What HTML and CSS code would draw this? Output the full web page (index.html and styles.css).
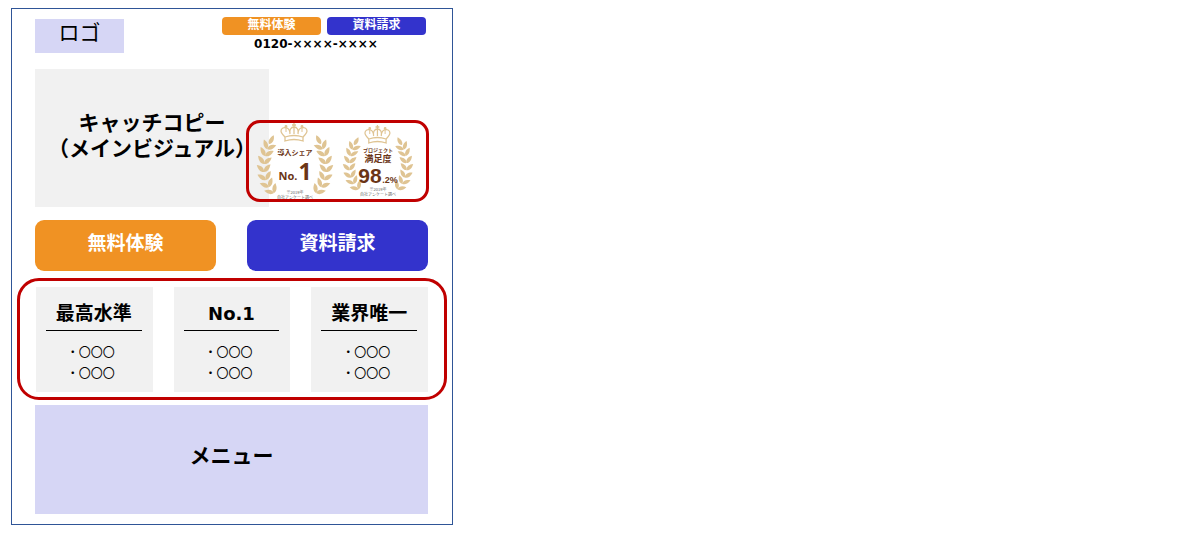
FILE: index.html
```html
<!DOCTYPE html>
<html lang="ja">
<head>
  <meta charset="UTF-8">
  <meta name="viewport" content="width=device-width, initial-scale=1">
  <title>ファーストビュー構成</title>
  <link rel="stylesheet" href="styles.css">
</head>
<body>
  <!-- 月桂樹と王冠の部品 -->
  <svg class="defs" width="0" height="0" aria-hidden="true">
    <defs>
      <path id="leaf" d="M0 0C-3-2-3-6-1-10C2-7 3-3 0 0Z"/>
      <g id="pair">
        <use href="#leaf" transform="rotate(-36)"/>
        <use href="#leaf" transform="scale(-1 1) rotate(-38)"/>
      </g>
      <g id="branch" fill="#dfc493">
        <use href="#leaf" transform="translate(12 9) rotate(34)"/>
        <use href="#pair" transform="translate(10 14) rotate(24)"/>
        <use href="#pair" transform="translate(8 21) rotate(16)"/>
        <use href="#pair" transform="translate(7 29) rotate(6)"/>
        <use href="#pair" transform="translate(7 37) rotate(-4)"/>
        <use href="#pair" transform="translate(9 45) rotate(-16)"/>
        <use href="#pair" transform="translate(12 52) rotate(-26)"/>
        <use href="#pair" transform="translate(17 58) rotate(-36)"/>
      </g>
      <g id="crown" fill="none" stroke="#dfc493" stroke-width="1.3">
        <path d="M5 14C3 12 1 10 1 8C1 5 4 4 7 5C9 6 10 8 10 11M23 14C25 12 27 10 27 8C27 5 24 4 21 5C19 6 18 8 18 11M10 11C9 7 11 4 14 4C17 4 19 7 18 11M14 4V11M14 0V4M12 2H16"/>
        <path d="M5 14Q14 11 23 14V18Q14 15 5 18Z"/>
        <path d="M6 5V9M22 5V9" stroke-width="1"/>
        <circle cx="6" cy="3.5" r=".8"/>
        <circle cx="22" cy="3.5" r=".8"/>
      </g>
    </defs>
  </svg>

  <div class="page">
    <header class="header">
      <div class="logo">ロゴ</div>
      <div class="contact">
        <div class="contact-buttons">
          <button type="button" class="btn btn-small btn-trial">無料体験</button>
          <button type="button" class="btn btn-small btn-request">資料請求</button>
        </div>
        <p class="tel">0120-××××-××××</p>
      </div>
    </header>

    <main>
      <section class="hero">
        <h1 class="catch">キャッチコピー<br>（メインビジュアル）</h1>
        <div class="awards">
          <svg class="medal" width="76" height="76" viewBox="0 0 76 76">
            <use href="#crown" transform="translate(23 0)"/>
            <use href="#branch" transform="translate(0 12)"/>
            <use href="#branch" transform="translate(76 12) scale(-1 1)"/>
            <text class="medal-label" x="38" y="32">導入シェア</text>
            <text class="medal-no" x="31" y="57">No.</text>
            <text class="medal-one" x="48" y="57">1</text>
            <text class="medal-note" x="38" y="71">※2019年</text>
            <text class="medal-note" x="38" y="76">自社アンケート調べ</text>
          </svg>
          <svg class="medal" width="70" height="76" viewBox="0 0 70 76">
            <use href="#crown" transform="translate(21 2) scale(.96 1)"/>
            <use href="#branch" transform="translate(0 14) scale(.92 .9)"/>
            <use href="#branch" transform="translate(70 14) scale(-.92 .9)"/>
            <text class="medal-sub" x="35" y="29">プロジェクト</text>
            <text class="medal-main" x="35" y="39">満足度</text>
            <text class="medal-rate" x="27" y="60">98</text>
            <text class="medal-percent" x="47" y="60">.2%</text>
            <text class="medal-note" x="35" y="68">※2019年</text>
            <text class="medal-note" x="35" y="73">自社アンケート調べ</text>
          </svg>
        </div>
      </section>

      <div class="cta">
        <button type="button" class="btn btn-large btn-trial">無料体験</button>
        <button type="button" class="btn btn-large btn-request">資料請求</button>
      </div>

      <section class="features">
        <div class="card">
          <h2>最高水準</h2>
          <ul>
            <li>・〇〇〇</li>
            <li>・〇〇〇</li>
          </ul>
        </div>
        <div class="card">
          <h2><span class="latin">No.1</span></h2>
          <ul>
            <li>・〇〇〇</li>
            <li>・〇〇〇</li>
          </ul>
        </div>
        <div class="card">
          <h2>業界唯一</h2>
          <ul>
            <li>・〇〇〇</li>
            <li>・〇〇〇</li>
          </ul>
        </div>
      </section>
    </main>

    <nav class="menu">メニュー</nav>
  </div>
</body>
</html>
```
FILE: styles.css
```css
* {
  box-sizing: border-box;
}

body {
  margin: 8px 11px;
  font-family: "Noto Sans CJK JP", sans-serif;
  color: #000;
  background: #fff;
}

h1, h2, p, ul {
  margin: 0;
  padding: 0;
}

.defs {
  position: absolute;
}

.page {
  max-width: 442px;
  padding: 8px 24px 10px 23px;
  border: 1px solid #2f5597;
}

/* ヘッダー */
.header {
  display: flex;
  justify-content: space-between;
  align-items: flex-start;
}

.logo {
  width: 89px;
  margin-top: 2px;
  padding-bottom: 10px;
  background: #d6d6f5;
  font-size: 21px;
  line-height: 24px;
  text-align: center;
}

.contact {
  padding-right: 2px;
}

.contact-buttons {
  display: flex;
  gap: 6px;
}

.tel {
  padding-right: 16px;
  font-family: "DejaVu Sans", sans-serif;
  font-size: 12px;
  font-weight: bold;
  line-height: 18px;
  text-align: center;
}

.btn {
  border: 0;
  color: #fff;
  font-family: inherit;
  font-weight: bold;
  cursor: pointer;
}

.btn-small {
  width: 99px;
  padding: 0 0 4px;
  border-radius: 4px;
  font-size: 12px;
  line-height: 14px;
}

.btn-large {
  flex: 1;
  padding: 0 0 7px;
  border-radius: 9px;
  font-size: 19px;
  line-height: 44px;
}

.btn-trial {
  background: #f09223;
}

.btn-request {
  background: #3333cc;
}

/* メインビジュアル */
.hero {
  position: relative;
  margin-top: 16px;
}

.catch {
  width: 234px;
  padding: 39px 0 47px;
  background: #f1f1f1;
  font-size: 21px;
  line-height: 26px;
  text-align: center;
  white-space: nowrap;
}

.awards {
  position: absolute;
  right: -1px;
  bottom: 5px;
  display: flex;
  justify-content: space-between;
  width: 183px;
  height: 82px;
  padding: 0 13px 0 8px;
  border: 3px solid #c00000;
  border-radius: 14px;
}

.medal {
  overflow: visible;
}

.medal text {
  fill: #6b3516;
  font-weight: bold;
  text-anchor: middle;
}

.medal .medal-label {
  font-size: 7px;
}

.medal .medal-no {
  font-family: "Noto Sans", sans-serif;
  font-size: 11px;
}

.medal .medal-one {
  font-family: "Noto Sans", sans-serif;
  font-size: 23px;
}

.medal .medal-sub {
  font-size: 5px;
}

.medal .medal-main {
  font-size: 9px;
}

.medal .medal-rate {
  font-family: "Liberation Sans", sans-serif;
  font-size: 21px;
}

.medal .medal-percent {
  font-family: "Liberation Sans", sans-serif;
  font-size: 9px;
}

.medal .medal-note {
  fill: #666;
  font-size: 4px;
  font-weight: normal;
}

/* ボタン */
.cta {
  display: flex;
  gap: 31px;
  margin-top: 13px;
}

/* 特長 */
.features {
  display: grid;
  grid-template-columns: repeat(3, 1fr);
  gap: 21px;
  margin: 7px -19px 0 -18px;
  padding: 6px 16px 5px;
  border: 3px solid #c00000;
  border-radius: 22px;
}

.card {
  padding: 11px 11px 9px 10px;
  background: #f1f1f1;
}

.card h2 {
  padding-bottom: 5px;
  border-bottom: 1px solid #000;
  font-size: 19px;
  line-height: 27px;
  text-align: center;
}

.card .latin {
  font-family: "DejaVu Sans", sans-serif;
  font-size: 18px;
  line-height: 1;
}

.card ul {
  padding: 10px 6px 0 0;
  list-style: none;
  font-size: 12px;
  line-height: 21px;
  text-align: center;
}

/* メニュー */
.menu {
  margin-top: 5px;
  padding: 34px 0 45px;
  background: #d6d6f5;
  font-size: 21px;
  font-weight: bold;
  line-height: 30px;
  text-align: center;
}
```
